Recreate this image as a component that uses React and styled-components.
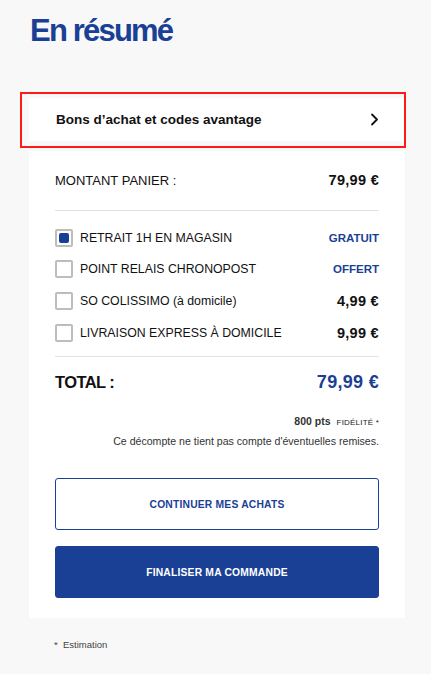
import React from "react";
import styled, { createGlobalStyle } from "styled-components";

const BLUE = "#1a4096";

const Global = createGlobalStyle`
  html, body { margin: 0; padding: 0; background: #f8f8f8; }
  body { font-family: "Liberation Sans", Arial, sans-serif; color: #111; }
  * { box-sizing: border-box; }
`;

const Page = styled.div`
  width: 431px;
  min-height: 674px;
  padding: 0 26px 0 29px;
  display: flex;
  flex-direction: column;
`;

const Title = styled.h1`
  margin: 13px 0 0 1px;
  font-size: 31px;
  line-height: 36px;
  font-weight: 700;
  letter-spacing: -1.8px;
  color: ${BLUE};
`;

const CouponFrame = styled.div`
  margin: 43px 0 0 -9px;
  width: 386px;
  height: 56px;
  border: 2px solid #ff1a1a;
  padding: 4px 0 5px 7px;
  display: flex;
`;

const CouponRow = styled.button`
  flex: 1;
  border: none;
  background: #fff;
  display: flex;
  align-items: center;
  justify-content: space-between;
  padding: 0 25px 0 27px;
  font-family: inherit;
  font-size: 13.5px;
  font-weight: 700;
  color: #111;
  cursor: pointer;
`;

const Card = styled.section`
  margin-top: 3px;
  background: #fff;
  padding: 20px 26px 20px 26px;
  display: flex;
  flex-direction: column;
`;

const Line = styled.div`
  display: flex;
  align-items: center;
  justify-content: space-between;
  height: ${(p) => p.h || 31.6}px;
`;

const Label = styled.span`
  font-size: ${(p) => p.size || 13}px;
  font-weight: ${(p) => (p.bold ? 700 : 400)};
  color: #111;
  text-transform: ${(p) => (p.upper ? "uppercase" : "none")};
  letter-spacing: ${(p) => p.ls || 0}px;
`;

const Amount = styled.span`
  font-size: ${(p) => p.size || 14.5}px;
  font-weight: 700;
  color: ${(p) => (p.blue ? BLUE : "#111")};
  letter-spacing: ${(p) => (p.ls !== undefined ? p.ls : 0.3)}px;
`;

const Divider = styled.hr`
  border: none;
  border-top: 1px solid #e2e2e2;
  margin: ${(p) => p.m || "0"};
  width: 100%;
`;

const Options = styled.div`
  display: flex;
  flex-direction: column;
  padding: 11px 0 8px 0;
`;

const OptionLeft = styled.label`
  display: flex;
  align-items: center;
  gap: 7px;
  font-size: 12.3px;
  color: #111;
`;

const Box = styled.span`
  width: 18px;
  height: 18px;
  border: 2px solid #bdbdbd;
  border-radius: 2px;
  display: flex;
  align-items: center;
  justify-content: center;
  &::after {
    content: "";
    display: ${(p) => (p.checked ? "block" : "none")};
    width: 10px;
    height: 10px;
    border-radius: 2px;
    background: ${BLUE};
  }
`;

const Points = styled.div`
  margin-top: 8px;
  display: flex;
  justify-content: flex-end;
  align-items: baseline;
  gap: 6px;
  font-size: 10.5px;
  font-weight: 700;
  color: #333;
  & small {
    font-size: 8px;
    font-weight: 400;
    color: #222;
    letter-spacing: 0.2px;
  }
`;

const Note = styled.p`
  margin: 8px 0 0;
  text-align: right;
  font-size: 10.6px;
  color: #333;
`;

const Button = styled.button`
  height: 52px;
  width: 100%;
  border-radius: 3px;
  border: 1.5px solid ${BLUE};
  background: ${(p) => (p.primary ? BLUE : "#fff")};
  color: ${(p) => (p.primary ? "#fff" : BLUE)};
  font-family: inherit;
  font-size: 10.3px;
  font-weight: 700;
  letter-spacing: 0.2px;
  margin-top: ${(p) => p.mt}px;
  cursor: pointer;
`;

const Footnote = styled.p`
  margin: 21px 0 0 25px;
  font-size: 9.5px;
  color: #444;
`;

const Chevron = () => (
  <svg width="9" height="13" viewBox="0 0 9 13" fill="none">
    <path d="M2 1.5 L7 6.5 L2 11.5" stroke="#111" strokeWidth="1.8" strokeLinecap="round" strokeLinejoin="round" />
  </svg>
);

const options = [
  { label: "RETRAIT 1H EN MAGASIN", price: "GRATUIT", blue: true, checked: true },
  { label: "POINT RELAIS CHRONOPOST", price: "OFFERT", blue: true },
  { label: "SO COLISSIMO (à domicile)", price: "4,99 €" },
  { label: "LIVRAISON EXPRESS À DOMICILE", price: "9,99 €" },
];

export default function App() {
  return (
    <Page>
      <Global />
      <Title>En résumé</Title>
      <CouponFrame>
        <CouponRow>
          <span>Bons d’achat et codes avantage</span>
          <Chevron />
        </CouponRow>
      </CouponFrame>
      <Card>
        <Line h={18}>
          <Label upper>Montant panier :</Label>
          <Amount>79,99 €</Amount>
        </Line>
        <Divider m="21px 0 0" />
        <Options>
          {options.map((o) => (
            <Line key={o.label}>
              <OptionLeft>
                <Box checked={o.checked} />
                {o.label}
              </OptionLeft>
              <Amount blue={o.blue} size={o.blue ? 11.5 : 14.5} ls={o.blue ? 0 : 0.3}>
                {o.price}
              </Amount>
            </Line>
          ))}
        </Options>
        <Divider />
        <Line h={50}>
          <Label bold size={16.5} ls={-0.6}>TOTAL :</Label>
          <Amount blue size={18}>79,99 €</Amount>
        </Line>
        <Points>
          <span>800 pts</span>
          <small>FIDÉLITÉ *</small>
        </Points>
        <Note>Ce décompte ne tient pas compte d'éventuelles remises.</Note>
        <Button mt={31}>CONTINUER MES ACHATS</Button>
        <Button primary mt={16}>FINALISER MA COMMANDE</Button>
      </Card>
      <Footnote>*&nbsp; Estimation</Footnote>
    </Page>
  );
}
